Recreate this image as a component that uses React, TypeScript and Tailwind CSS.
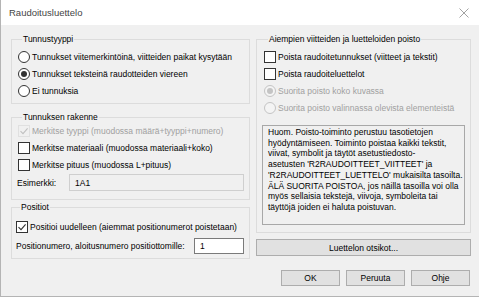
import React from "react";

function Radio({ checked = false, disabled = false, label }: { checked?: boolean; disabled?: boolean; label: string }) {
    return (
        <div className="flex items-center h-[17px]">
            <span className={`flex items-center justify-center w-[12px] h-[12px] rounded-full border ${disabled ? "border-[#c4c4c4] bg-[#f4f4f4]" : "border-[#333] bg-white"}`}>
                {checked && <span className={`w-[6px] h-[6px] rounded-full ${disabled ? "bg-[#c4c4c4]" : "bg-[#333]"}`}></span>}
            </span>
            <span className={`ml-[2px] ${disabled ? "text-[#a0a0a0]" : "text-black"}`}>{label}</span>
        </div>
    );
}

function Check({ checked = false, disabled = false, label }: { checked?: boolean; disabled?: boolean; label: string }) {
    return (
        <div className="flex items-center h-[17px]">
            <span className={`flex items-center justify-center w-[12px] h-[12px] border ${disabled ? "border-[#e0e0e0] bg-[#f0f0f0]" : "border-[#333] bg-white"}`}>
                {checked && (
                    <svg width="10" height="10" viewBox="0 0 10 10">
                        <path d="M1.5 5.2 L4 7.6 L8.6 2.4" fill="none" stroke={disabled ? "#c0c0c0" : "#333"} strokeWidth="1.1" />
                    </svg>
                )}
            </span>
            <span className={`ml-[2px] ${disabled ? "text-[#a0a0a0]" : "text-black"}`}>{label}</span>
        </div>
    );
}

function Btn({ children, className = "" }: { children: React.ReactNode; className?: string }) {
    return (
        <button className={`flex items-center justify-center bg-[#e1e1e1] border border-[#adadad] text-black ${className}`}>
            {children}
        </button>
    );
}

export default function App() {
    return (
        <div className="w-[479px] h-[297px] bg-[#f0f0f0] border-l border-b border-[#b4b4b4] flex flex-col font-['Liberation_Sans',Arial,sans-serif] text-[8.5px] leading-[10px] text-black overflow-hidden">
            <div className="h-[25px] bg-white flex items-center justify-between pl-[8px] pr-[10px] shrink-0">
                <span className="text-[9.5px] text-[#444]">Raudoitusluettelo</span>
                <svg width="10" height="10" viewBox="0 0 10 10">
                    <path d="M0.5 0.5 L9.5 9.5 M9.5 0.5 L0.5 9.5" stroke="#8a8a8a" strokeWidth="0.8" />
                </svg>
            </div>

            <div className="flex gap-[6px] pl-[10px] pt-[9px]">
                {/* left column */}
                <div className="flex flex-col w-[239px]">
                    <fieldset className="border border-[#dcdcdc] pl-[6px] pt-[4px] pb-[4px]">
                        <legend className="ml-[4px] px-[1px]">Tunnustyyppi</legend>
                        <Radio label="Tunnukset viitemerkintöinä, viitteiden paikat kysytään" />
                        <Radio checked label="Tunnukset teksteinä raudotteiden viereen" />
                        <Radio label="Ei tunnuksia" />
                    </fieldset>

                    <fieldset className="mt-[8px] border border-[#dcdcdc] pl-[6px] pr-[5px] pb-[8px]">
                        <legend className="ml-[4px] px-[1px]">Tunnuksen rakenne</legend>
                        <Check checked disabled label="Merkitse tyyppi (muodossa määrä+tyyppi+numero)" />
                        <Check label="Merkitse materiaali (muodossa materiaali+koko)" />
                        <Check label="Merkitse pituus (muodossa L+pituus)" />
                        <div className="mt-[1px] flex items-center h-[17px]">
                            <span className="w-[52px] -ml-[1px]">Esimerkki:</span>
                            <div className="flex-1 h-full border border-[#cfcfcf] bg-[#f0f0f0] flex items-center pl-[5px]">1A1</div>
                        </div>
                    </fieldset>

                    <fieldset className="mt-[2px] border border-[#dcdcdc] pl-[4px] pr-[5px] pt-[6px] pb-[4px]">
                        <legend className="ml-[4px] px-[1px]">Positiot</legend>
                        <Check checked label="Positioi uudelleen (aiemmat positionumerot poistetaan)" />
                        <div className="mt-[3px] flex items-center h-[16px]">
                            <span className="flex-1">Positionumero, aloitusnumero positiottomille:</span>
                            <div className="w-[50px] h-full border border-[#7a7a7a] bg-white flex items-center pl-[5px]">1</div>
                        </div>
                    </fieldset>
                </div>

                {/* right column */}
                <div className="flex flex-col w-[215px]">
                    <fieldset className="border border-[#dcdcdc] pl-[7px] pr-[5px] pt-[4px] pb-[7px]">
                        <legend className="ml-[4px] px-[1px]">Aiempien viitteiden ja luetteloiden poisto</legend>
                        <Check label="Poista raudoitetunnukset (viitteet ja tekstit)" />
                        <Check label="Poista raudoiteluettelot" />
                        <Radio checked disabled label="Suorita poisto koko kuvassa" />
                        <Radio disabled label="Suorita poisto valinnassa olevista elementeistä" />
                        <div className="mt-[9px] -ml-[2px] h-[100px] border border-[#a8a8a8] bg-[#f0f0f0] pl-[5px] pt-[1px] leading-[10.7px]">
                            <div>Huom. Poisto-toiminto perustuu tasotietojen</div>
                            <div>hyödyntämiseen. Toiminto poistaa kaikki tekstit,</div>
                            <div>viivat, symbolit ja täytöt asetustiedosto-</div>
                            <div>asetusten 'R2RAUDOITTEET_VIITTEET' ja</div>
                            <div>'R2RAUDOITTEET_LUETTELO' mukaisilta tasoilta.</div>
                            <div>ÄLÄ SUORITA POISTOA, jos näillä tasoilla voi olla</div>
                            <div>myös sellaisia tekstejä, viivoja, symboleita tai</div>
                            <div>täyttöjä joiden ei haluta poistuvan.</div>
                        </div>
                    </fieldset>

                    <Btn className="mt-[6px] h-[17px] w-full">Luettelon otsikot...</Btn>

                    <div className="mt-[14px] flex justify-end gap-[6px] pr-[1px]">
                        <Btn className="w-[59px] h-[16px]">OK</Btn>
                        <Btn className="w-[59px] h-[16px]">Peruuta</Btn>
                        <Btn className="w-[59px] h-[16px]">Ohje</Btn>
                    </div>
                </div>
            </div>
        </div>
    );
}
